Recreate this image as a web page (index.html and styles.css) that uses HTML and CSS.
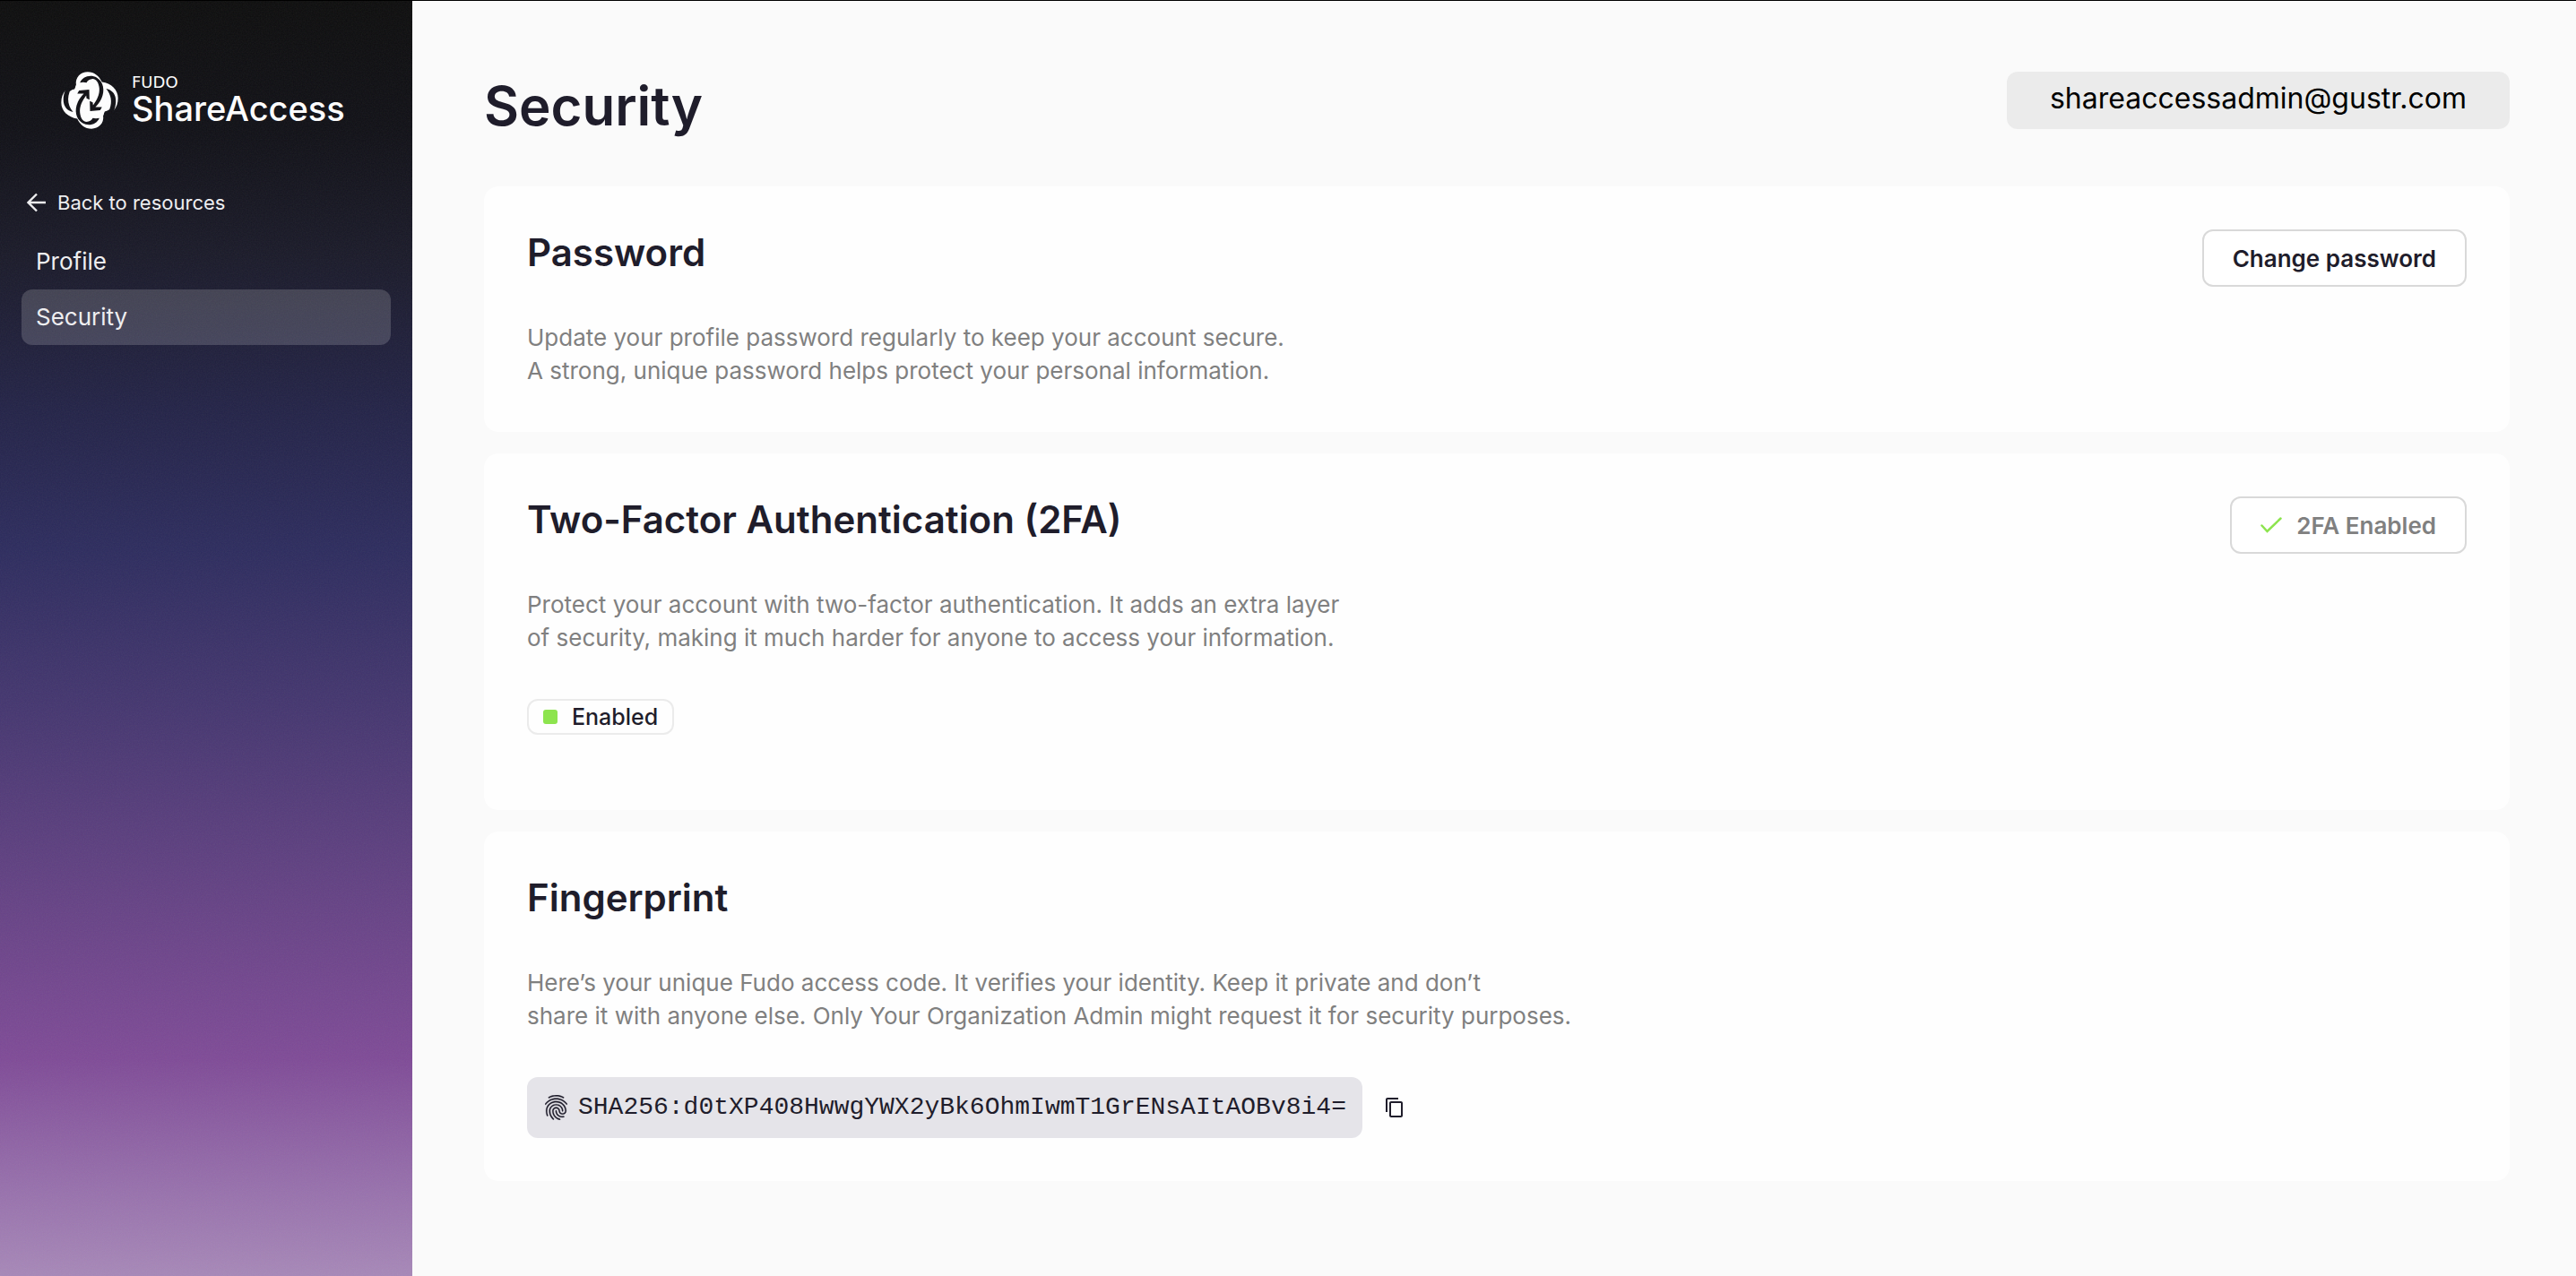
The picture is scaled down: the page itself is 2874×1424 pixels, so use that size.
FILE: index.html
```html
<!DOCTYPE html>
<html lang="en">
<head>
    <meta charset="UTF-8">
    <meta name="viewport" content="width=device-width, initial-scale=1.0">
    <title>Security - Fudo ShareAccess</title>
    <link rel="stylesheet" href="styles.css">
</head>
<body>
    <aside class="sidebar">
        <svg class="grain" aria-hidden="true">
            <filter id="noise">
                <feTurbulence type="fractalNoise" baseFrequency="0.7" numOctaves="2" stitchTiles="stitch"/>
            </filter>
            <rect width="100%" height="100%" filter="url(#noise)"/>
        </svg>

        <div class="logo">
            <svg class="logo-mark" viewBox="53 59 193 193" aria-hidden="true">
                <defs>
                    <path id="petal" d="M104 104 C100 78 120 60 143 60 C165 60 182 74 191 94 C222 98 245 120 245 148 C245 165 240 178 232 188 L224 176 C218 186 210 192 200 193 L195 207 L150 220 L90 150 Z"/>
                    <path id="arrow" d="M117 96 C124 76 152 66 174 79 C196 93 202 122 189 150 C184 162 175 171 169 178 L191 178 L185 189 L151 192 L150 158 L160 162 L161 172 C174 154 184 136 182 114 C180 94 170 83 160 83 C150 84 143 88 139 96 C132 94 124 94 117 96 Z"/>
                    <path id="rim" d="M205 116 C236 122 246 152 231 192 L217 184 C226 160 222 136 205 116 Z"/>
                    <mask id="cut" maskUnits="userSpaceOnUse" x="50" y="50" width="200" height="210">
                        <rect x="50" y="50" width="200" height="210" fill="#fff"/>
                        <use href="#arrow"/>
                        <use href="#arrow" transform="rotate(180 149.5 155.5)"/>
                        <use href="#rim"/>
                        <use href="#rim" transform="rotate(180 149.5 155.5)"/>
                    </mask>
                </defs>
                <g fill="#fff" mask="url(#cut)">
                    <use href="#petal"/>
                    <use href="#petal" transform="rotate(180 149.5 155.5)"/>
                </g>
            </svg>
            <div class="logo-text">
                <span class="logo-brand">FUDO</span>
                <span class="logo-name">ShareAccess</span>
            </div>
        </div>

        <a class="back" href="#resources">
            <svg width="22" height="22" viewBox="0 0 22 22" aria-hidden="true">
                <path d="M21 11H2M11 1.5 1.5 11 11 20.5" fill="none" stroke="currentColor" stroke-width="2.4"/>
            </svg>
            Back to resources
        </a>
        <nav class="menu">
            <a href="#profile">Profile</a>
            <a href="#security" class="active">Security</a>
        </nav>
    </aside>

    <main class="content">
        <header class="topbar">
            <h1>Security</h1>
            <div class="account">shareaccessadmin@gustr.com</div>
        </header>

        <section class="card">
            <div class="card-head">
                <h2>Password</h2>
                <button type="button" class="btn">Change password</button>
            </div>
            <p>Update your profile password regularly to keep your account secure.<br>
            A strong, unique password helps protect your personal information.</p>
        </section>

        <section class="card card-2fa">
            <div class="card-head">
                <h2>Two-Factor Authentication (2FA)</h2>
                <button type="button" class="btn" disabled>
                    <svg width="24" height="18" viewBox="0 0 24 18" aria-hidden="true">
                        <path d="M1.5 9.5 7.5 16 22.5 1.5" fill="none" stroke="#8de44e" stroke-width="2.5" stroke-linecap="round"/>
                    </svg>
                    2FA Enabled
                </button>
            </div>
            <p>Protect your account with two-factor authentication. It adds an extra layer<br>
            of security, making it much harder for anyone to access your information.</p>
            <span class="badge"><i class="dot"></i>Enabled</span>
        </section>

        <section class="card">
            <div class="card-head">
                <h2>Fingerprint</h2>
            </div>
            <p>Here’s your unique Fudo access code. It verifies your identity. Keep it private and don’t<br>
            share it with anyone else. Only Your Organization Admin might request it for security purposes.</p>
            <div class="code-row">
                <div class="code">
                    <svg width="25" height="28" viewBox="3 2 18 20" aria-hidden="true">
                        <path fill="currentColor" stroke="currentColor" stroke-width=".2" d="M17.81 4.47c-.08 0-.16-.02-.23-.06C15.66 3.42 14 3 12.01 3c-1.98 0-3.86.47-5.57 1.41-.24.13-.54.04-.68-.2-.13-.24-.04-.55.2-.68C7.82 2.52 9.86 2 12.01 2c2.13 0 3.99.47 6.03 1.52.25.13.34.43.21.67-.09.18-.26.28-.44.28zM3.5 9.72c-.1 0-.2-.03-.29-.09-.23-.16-.28-.47-.12-.7.99-1.4 2.25-2.5 3.75-3.27C9.98 4.04 14 4.03 17.15 5.65c1.5.77 2.76 1.86 3.75 3.25.16.22.11.54-.12.7-.23.16-.54.11-.7-.12-.9-1.26-2.04-2.25-3.39-2.94-2.87-1.47-6.54-1.47-9.4.01-1.36.7-2.5 1.7-3.4 2.96-.08.14-.23.21-.39.21zm6.25 12.07c-.13 0-.26-.05-.35-.15-.87-.87-1.34-1.43-2.01-2.64-.69-1.23-1.05-2.73-1.05-4.34 0-2.97 2.54-5.39 5.66-5.39s5.66 2.42 5.66 5.39c0 .28-.22.5-.5.5s-.5-.22-.5-.5c0-2.42-2.09-4.39-4.66-4.39-2.57 0-4.66 1.97-4.66 4.39 0 1.44.32 2.77.93 3.85.64 1.15 1.08 1.64 1.85 2.42.19.2.19.51 0 .71-.11.1-.24.15-.37.15zm7.17-1.85c-1.19 0-2.24-.3-3.1-.89-1.49-1.01-2.38-2.65-2.38-4.39 0-.28.22-.5.5-.5s.5.22.5.5c0 1.41.72 2.74 1.94 3.56.71.48 1.54.71 2.54.71.24 0 .64-.03 1.04-.1.27-.05.53.13.58.41.05.27-.13.53-.41.58-.57.11-1.07.12-1.21.12zM14.91 22c-.04 0-.09-.01-.13-.02-1.59-.44-2.63-1.03-3.72-2.1-1.4-1.39-2.17-3.24-2.17-5.22 0-1.62 1.38-2.94 3.08-2.94 1.7 0 3.08 1.32 3.08 2.94 0 1.07.93 1.94 2.08 1.94s2.08-.87 2.08-1.94c0-3.77-3.25-6.83-7.25-6.83-2.84 0-5.44 1.58-6.61 4.03-.39.81-.59 1.76-.59 2.8 0 .78.07 2.01.67 3.61.1.26-.03.55-.29.64-.26.1-.55-.04-.64-.29-.49-1.31-.73-2.61-.73-3.96 0-1.2.23-2.29.68-3.24 1.33-2.79 4.28-4.6 7.51-4.6 4.55 0 8.25 3.51 8.25 7.83 0 1.62-1.38 2.94-3.08 2.94s-3.08-1.32-3.08-2.94c0-1.07-.93-1.94-2.08-1.94s-2.08.87-2.08 1.94c0 1.71.66 3.31 1.87 4.51.95.94 1.86 1.46 3.27 1.85.27.07.42.35.35.61-.05.23-.26.38-.47.38z"/>
                    </svg>
                    <code>SHA256:d0tXP408HwwgYWX2yBk6OhmIwmT1GrENsAItAOBv8i4=</code>
                </div>
                <button type="button" class="copy" aria-label="Copy fingerprint">
                    <svg width="24" height="24" viewBox="0 0 24 24" aria-hidden="true">
                        <path fill="currentColor" d="M16 1H4c-1.1 0-2 .9-2 2v14h2V3h12V1zm3 4H8c-1.1 0-2 .9-2 2v14c0 1.1.9 2 2 2h11c1.1 0 2-.9 2-2V7c0-1.1-.9-2-2-2zm0 16H8V7h11v14z"/>
                    </svg>
                </button>
            </div>
        </section>
    </main>
</body>
</html>
```
FILE: styles.css
```css
* {
    box-sizing: border-box;
}

body {
    margin: 0;
    min-height: 100vh;
    display: flex;
    border-top: 1px solid #000;
    background-color: #fafafa;
    color: #1f1d2b;
    font-family: Inter, "Liberation Sans", sans-serif;
    font-size: 26px;
}

h1, h2, p {
    margin: 0;
}

a {
    color: inherit;
    text-decoration: none;
}

button {
    font: inherit;
    color: inherit;
}

svg {
    flex: none;
}

/* sidebar */
.sidebar {
    position: relative;
    flex: none;
    width: 460px;
    padding: 79px 24px 24px;
    color: #f0f0f2;
    background: linear-gradient(#0d0d0d 0%, #101016 10%, #1a1a29 20%, #232347 32%, #2d2c5e 43%, #44366f 55%, #644284 70%, #7f4b97 83%, #9770ac 93%, #a788b8 100%);
}

.grain {
    position: absolute;
    inset: 0;
    width: 100%;
    height: 100%;
    opacity: 0.07;
}

.logo {
    display: flex;
    align-items: center;
    gap: 15px;
    padding-left: 44px;
    color: #fff;
}

.logo-mark {
    width: 64px;
    height: 64px;
}

.logo-text {
    display: flex;
    flex-direction: column;
}

.logo-brand {
    font-family: "DejaVu Sans", sans-serif;
    font-size: 18px;
    line-height: 18px;
}

.logo-name {
    font-size: 38px;
    font-weight: 500;
    line-height: 40px;
}

.back {
    display: flex;
    align-items: center;
    gap: 12px;
    margin-top: 67px;
    padding-left: 6px;
    font-size: 22px;
    line-height: 30px;
}

.menu {
    display: flex;
    flex-direction: column;
    margin-top: 20px;
}

.menu a {
    padding: 0 16px;
    border-radius: 12px;
    line-height: 62px;
}

.menu .active {
    background-color: rgba(255, 255, 255, 0.17);
}

/* content */
.content {
    flex: 1;
    display: flex;
    flex-direction: column;
    gap: 24px;
    padding: 79px 74px 79px 80px;
}

.topbar {
    display: flex;
    justify-content: space-between;
    align-items: flex-start;
    padding-bottom: 28px;
}

h1 {
    font-size: 60px;
    font-weight: 600;
    line-height: 76px;
}

.account {
    padding: 0 48px 4px;
    border-radius: 12px;
    background-color: #ebebeb;
    color: #000;
    font-size: 32px;
    line-height: 60px;
}

.card {
    padding: 48px;
    border-radius: 16px;
    background-color: #fefefe;
}

.card-2fa {
    padding-bottom: 84px;
}

.card-head {
    display: flex;
    justify-content: space-between;
    align-items: flex-start;
    height: 64px;
    margin-bottom: 38px;
}

h2 {
    font-size: 42px;
    font-weight: 600;
    line-height: 52px;
}

.card p {
    padding-bottom: 2px;
    color: #808080;
    line-height: 37px;
}

.btn {
    display: flex;
    align-items: center;
    gap: 16px;
    height: 64px;
    padding: 0 32px;
    border: 2px solid #d9d9d9;
    border-radius: 12px;
    background-color: #fff;
    font-weight: 600;
}

.btn:disabled {
    color: #808080;
}

.badge {
    display: flex;
    align-items: center;
    gap: 16px;
    width: fit-content;
    margin-top: 48px;
    padding: 0 16px;
    border: 2px solid #ebebeb;
    border-radius: 12px;
    font-size: 25px;
    font-weight: 500;
    line-height: 36px;
}

.dot {
    width: 16px;
    height: 16px;
    border-radius: 3px;
    background-color: #8de44e;
}

.code-row {
    display: flex;
    align-items: center;
    gap: 24px;
    margin-top: 48px;
}

.code {
    display: flex;
    align-items: center;
    gap: 12px;
    padding: 0 18px 0 20px;
    border-radius: 12px;
    background-color: #e5e4e9;
    line-height: 68px;
}

.code code {
    font-family: "Liberation Mono", monospace;
    font-size: 28px;
}

.copy {
    display: flex;
    padding: 0;
    border: 0;
    background: none;
}
```
